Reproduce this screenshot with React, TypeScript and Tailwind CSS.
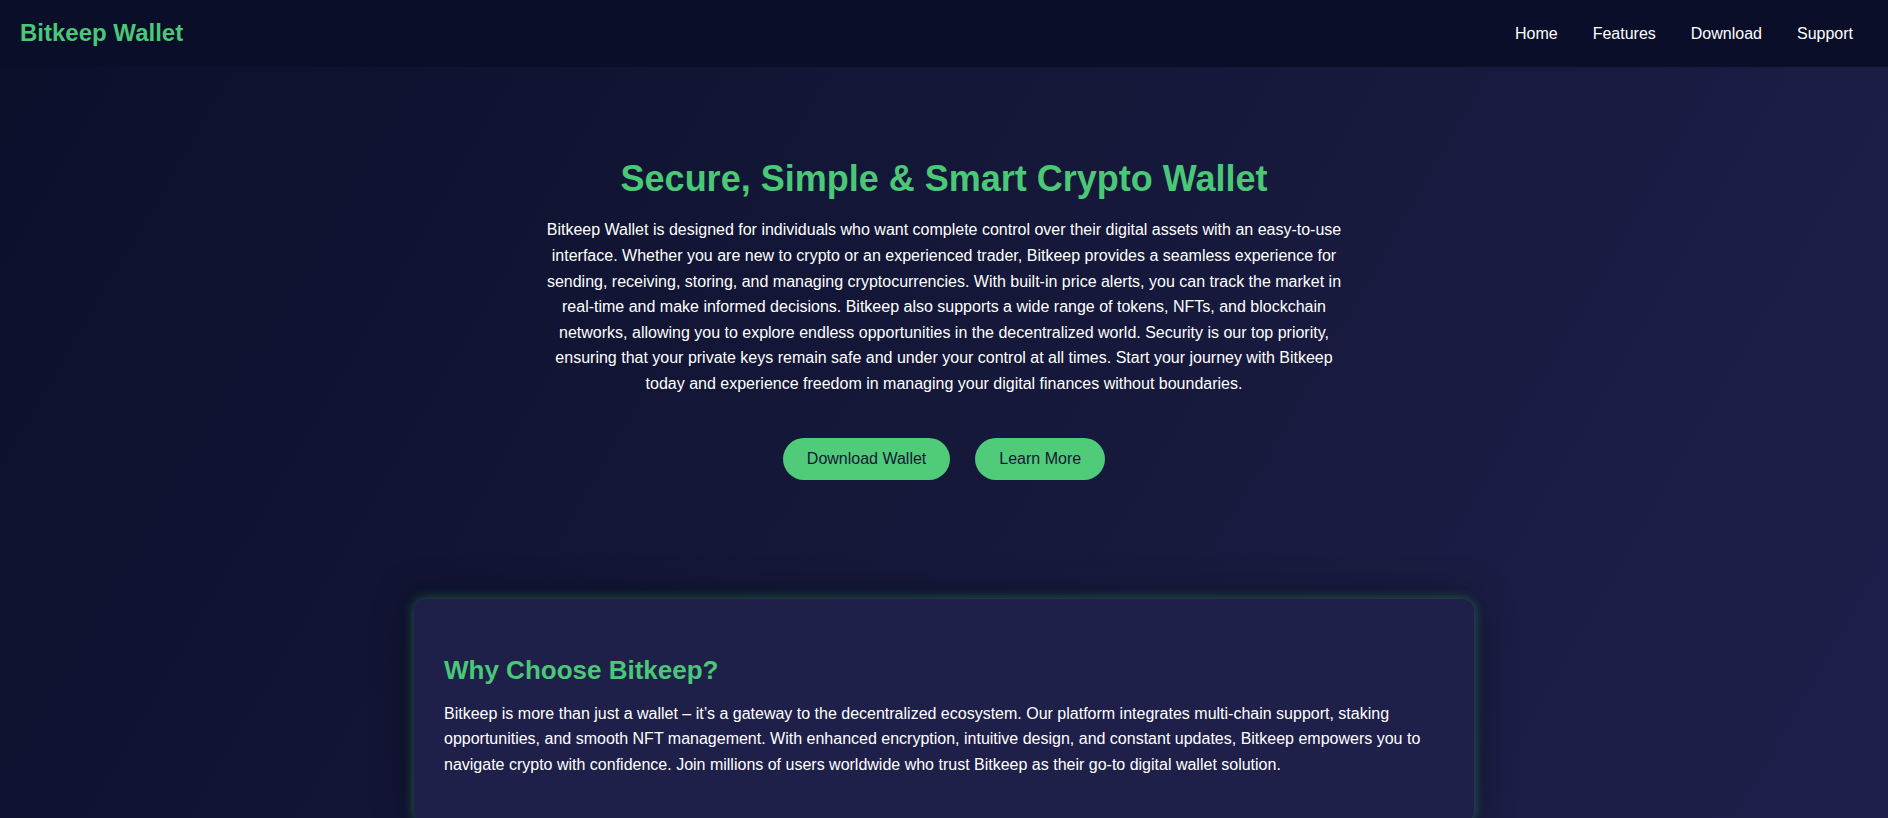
import React from "react";

export default function App() {
  return (
    <div className="min-h-screen bg-[linear-gradient(120deg,#0b0f2a_0%,#151839_50%,#1e204c_100%)] font-['Liberation_Sans',Arial,sans-serif] text-white">
      <header className="flex h-[67px] items-center justify-between bg-[#0a0e29] pl-5 pr-[35px]">
        <div className="pb-[2px] text-2xl font-bold text-[#4ac777]">Bitkeep Wallet</div>
        <nav className="flex gap-[35px] text-base leading-normal text-white">
          <a href="#">Home</a>
          <a href="#">Features</a>
          <a href="#">Download</a>
          <a href="#">Support</a>
        </nav>
      </header>

      <section className="flex flex-col items-center px-5 pt-[91px] text-center">
        <h1 className="text-[36px] font-bold leading-[1.15] text-[#4ac777]">
          Secure, Simple &amp; Smart Crypto Wallet
        </h1>
        <p className="mt-[18px] max-w-[816px] text-base leading-[1.6] text-white">
          Bitkeep Wallet is designed for individuals who want complete control over their digital assets with an
          easy-to-use interface. Whether you are new to crypto or an experienced trader, Bitkeep provides a seamless
          experience for sending, receiving, storing, and managing cryptocurrencies. With built-in price alerts, you
          can track the market in real-time and make informed decisions. Bitkeep also supports a wide range of tokens,
          NFTs, and blockchain networks, allowing you to explore endless opportunities in the decentralized world.
          Security is our top priority, ensuring that your private keys remain safe and under your control at all
          times. Start your journey with Bitkeep today and experience freedom in managing your digital finances
          without boundaries.
        </p>
        <div className="mt-[41px] flex gap-[25px]">
          <button className="rounded-full bg-[#4fcb7a] px-6 py-3 text-base leading-[18px] text-[#141833]">
            Download Wallet
          </button>
          <button className="rounded-full bg-[#4fcb7a] px-6 py-3 text-base leading-[18px] text-[#141833]">
            Learn More
          </button>
        </div>
      </section>

      <section className="mx-auto mt-[119px] w-[1060px] rounded-xl bg-[#1f2049] px-[30px] pt-[30px] pb-[30px] shadow-[0_0_12px_rgba(72,199,120,0.45),0_0_40px_rgba(0,0,0,0.45)]">
        <h2 className="mt-[26px] text-[26px] font-bold leading-[30px] text-[#4ac777]">Why Choose Bitkeep?</h2>
        <p className="mt-4 text-base leading-[1.6] text-white">
          Bitkeep is more than just a wallet – it’s a gateway to the decentralized ecosystem. Our platform integrates
          multi-chain support, staking opportunities, and smooth NFT management. With enhanced encryption, intuitive
          design, and constant updates, Bitkeep empowers you to navigate crypto with confidence. Join millions of users
          worldwide who trust Bitkeep as their go-to digital wallet solution.
        </p>
        <div className="h-4" />
      </section>
      <div className="h-10" />
    </div>
  );
}
